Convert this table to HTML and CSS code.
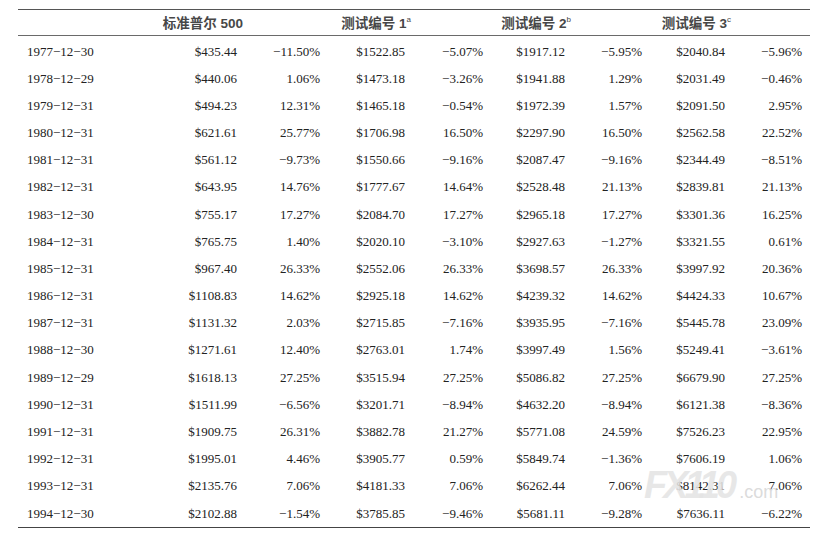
FILE: index.html
```html
<!DOCTYPE html>
<html lang="zh">
<head>
<meta charset="utf-8">
<title>标准普尔 500 测试</title>
<link rel="stylesheet" href="styles.css">
</head>
<body>
<div class="page">
<table class="data">
<colgroup>
<col class="c-date"><col class="c-v1"><col class="c-p1"><col class="c-v2"><col class="c-p2"><col class="c-v3"><col class="c-p3"><col class="c-v4"><col class="c-p4">
</colgroup>
<thead>
<tr>
<th></th>
<th><span class="hd">标准普尔 500</span></th>
<th></th>
<th><span class="hd">测试编号 1<sup>a</sup></span></th>
<th></th>
<th><span class="hd">测试编号 2<sup>b</sup></span></th>
<th></th>
<th><span class="hd">测试编号 3<sup>c</sup></span></th>
<th></th>
</tr>
</thead>
<tbody>
<tr><td>1977−12−30</td><td>$435.44</td><td>−11.50%</td><td>$1522.85</td><td>−5.07%</td><td>$1917.12</td><td>−5.95%</td><td>$2040.84</td><td>−5.96%</td></tr>
<tr><td>1978−12−29</td><td>$440.06</td><td>1.06%</td><td>$1473.18</td><td>−3.26%</td><td>$1941.88</td><td>1.29%</td><td>$2031.49</td><td>−0.46%</td></tr>
<tr><td>1979−12−31</td><td>$494.23</td><td>12.31%</td><td>$1465.18</td><td>−0.54%</td><td>$1972.39</td><td>1.57%</td><td>$2091.50</td><td>2.95%</td></tr>
<tr><td>1980−12−31</td><td>$621.61</td><td>25.77%</td><td>$1706.98</td><td>16.50%</td><td>$2297.90</td><td>16.50%</td><td>$2562.58</td><td>22.52%</td></tr>
<tr><td>1981−12−31</td><td>$561.12</td><td>−9.73%</td><td>$1550.66</td><td>−9.16%</td><td>$2087.47</td><td>−9.16%</td><td>$2344.49</td><td>−8.51%</td></tr>
<tr><td>1982−12−31</td><td>$643.95</td><td>14.76%</td><td>$1777.67</td><td>14.64%</td><td>$2528.48</td><td>21.13%</td><td>$2839.81</td><td>21.13%</td></tr>
<tr><td>1983−12−30</td><td>$755.17</td><td>17.27%</td><td>$2084.70</td><td>17.27%</td><td>$2965.18</td><td>17.27%</td><td>$3301.36</td><td>16.25%</td></tr>
<tr><td>1984−12−31</td><td>$765.75</td><td>1.40%</td><td>$2020.10</td><td>−3.10%</td><td>$2927.63</td><td>−1.27%</td><td>$3321.55</td><td>0.61%</td></tr>
<tr><td>1985−12−31</td><td>$967.40</td><td>26.33%</td><td>$2552.06</td><td>26.33%</td><td>$3698.57</td><td>26.33%</td><td>$3997.92</td><td>20.36%</td></tr>
<tr><td>1986−12−31</td><td>$1108.83</td><td>14.62%</td><td>$2925.18</td><td>14.62%</td><td>$4239.32</td><td>14.62%</td><td>$4424.33</td><td>10.67%</td></tr>
<tr><td>1987−12−31</td><td>$1131.32</td><td>2.03%</td><td>$2715.85</td><td>−7.16%</td><td>$3935.95</td><td>−7.16%</td><td>$5445.78</td><td>23.09%</td></tr>
<tr><td>1988−12−30</td><td>$1271.61</td><td>12.40%</td><td>$2763.01</td><td>1.74%</td><td>$3997.49</td><td>1.56%</td><td>$5249.41</td><td>−3.61%</td></tr>
<tr><td>1989−12−29</td><td>$1618.13</td><td>27.25%</td><td>$3515.94</td><td>27.25%</td><td>$5086.82</td><td>27.25%</td><td>$6679.90</td><td>27.25%</td></tr>
<tr><td>1990−12−31</td><td>$1511.99</td><td>−6.56%</td><td>$3201.71</td><td>−8.94%</td><td>$4632.20</td><td>−8.94%</td><td>$6121.38</td><td>−8.36%</td></tr>
<tr><td>1991−12−31</td><td>$1909.75</td><td>26.31%</td><td>$3882.78</td><td>21.27%</td><td>$5771.08</td><td>24.59%</td><td>$7526.23</td><td>22.95%</td></tr>
<tr><td>1992−12−31</td><td>$1995.01</td><td>4.46%</td><td>$3905.77</td><td>0.59%</td><td>$5849.74</td><td>−1.36%</td><td>$7606.19</td><td>1.06%</td></tr>
<tr><td>1993−12−31</td><td>$2135.76</td><td>7.06%</td><td>$4181.33</td><td>7.06%</td><td>$6262.44</td><td>7.06%</td><td>$8142.31</td><td>7.06%</td></tr>
<tr><td>1994−12−30</td><td>$2102.88</td><td>−1.54%</td><td>$3785.85</td><td>−9.46%</td><td>$5681.11</td><td>−9.28%</td><td>$7636.11</td><td>−6.22%</td></tr>
</tbody>
</table>
<div class="watermark"><span class="wm-big">FX110</span><span class="wm-small">.com</span></div>
</div>
</body>
</html>
```
FILE: styles.css
```css
html, body {
  margin: 0;
  padding: 0;
  background: #ffffff;
}

.page {
  position: relative;
  width: 822px;
  height: 545px;
  padding: 9px 0 0 18px;
  box-sizing: border-box;
}

.data {
  width: 792px;
  table-layout: fixed;
  border-collapse: separate;
  border-spacing: 0;
  font-family: "Liberation Serif", "Times New Roman", serif;
  font-size: 13px;
  color: #222222;
}

.c-date { width: 122px; }
.c-v1 { width: 97px; }
.c-p1 { width: 83px; }
.c-v2 { width: 85px; }
.c-p2 { width: 78px; }
.c-v3 { width: 82px; }
.c-p3 { width: 77px; }
.c-v4 { width: 83px; }
.c-p4 { width: 85px; }

.data th {
  height: 24.5px;
  padding: 0;
  border-top: 1.5px solid #555;
  border-bottom: 1px solid #6a6a6a;
  text-align: right;
  vertical-align: middle;
  font-family: "Liberation Sans", "Noto Sans CJK SC", sans-serif;
  font-size: 13.5px;
  font-weight: 700;
  color: #474747;
  white-space: nowrap;
}

.hd {
  display: inline-block;
  margin-right: -6px;
}

.hd sup {
  font-size: 8px;
  font-weight: 400;
  vertical-align: 6px;
  line-height: 0;
}

.data td {
  height: 27.18px;
  padding: 0;
  text-align: right;
  vertical-align: middle;
  white-space: nowrap;
  line-height: 1;
}

.data tbody tr:first-child td {
  padding-top: 2px;
}

.data td:first-child {
  text-align: left;
  padding-left: 9px;
}

.data td:last-child {
  padding-right: 8px;
}

.data tbody tr:last-child td {
  border-bottom: 1.5px solid #444;
}

.watermark {
  position: absolute;
  left: 644px;
  top: 470px;
  display: flex;
  align-items: baseline;
  color: rgba(228, 228, 228, 0.88);
  font-family: "Liberation Sans", Arial, sans-serif;
  font-weight: 700;
  line-height: 0.8;
  pointer-events: none;
}

.wm-big {
  font-size: 38px;
  font-style: italic;
  letter-spacing: -4px;
}

.wm-small {
  font-size: 18px;
  font-weight: 400;
  margin-left: 6px;
  color: rgba(215, 215, 215, 0.9);
}
```
